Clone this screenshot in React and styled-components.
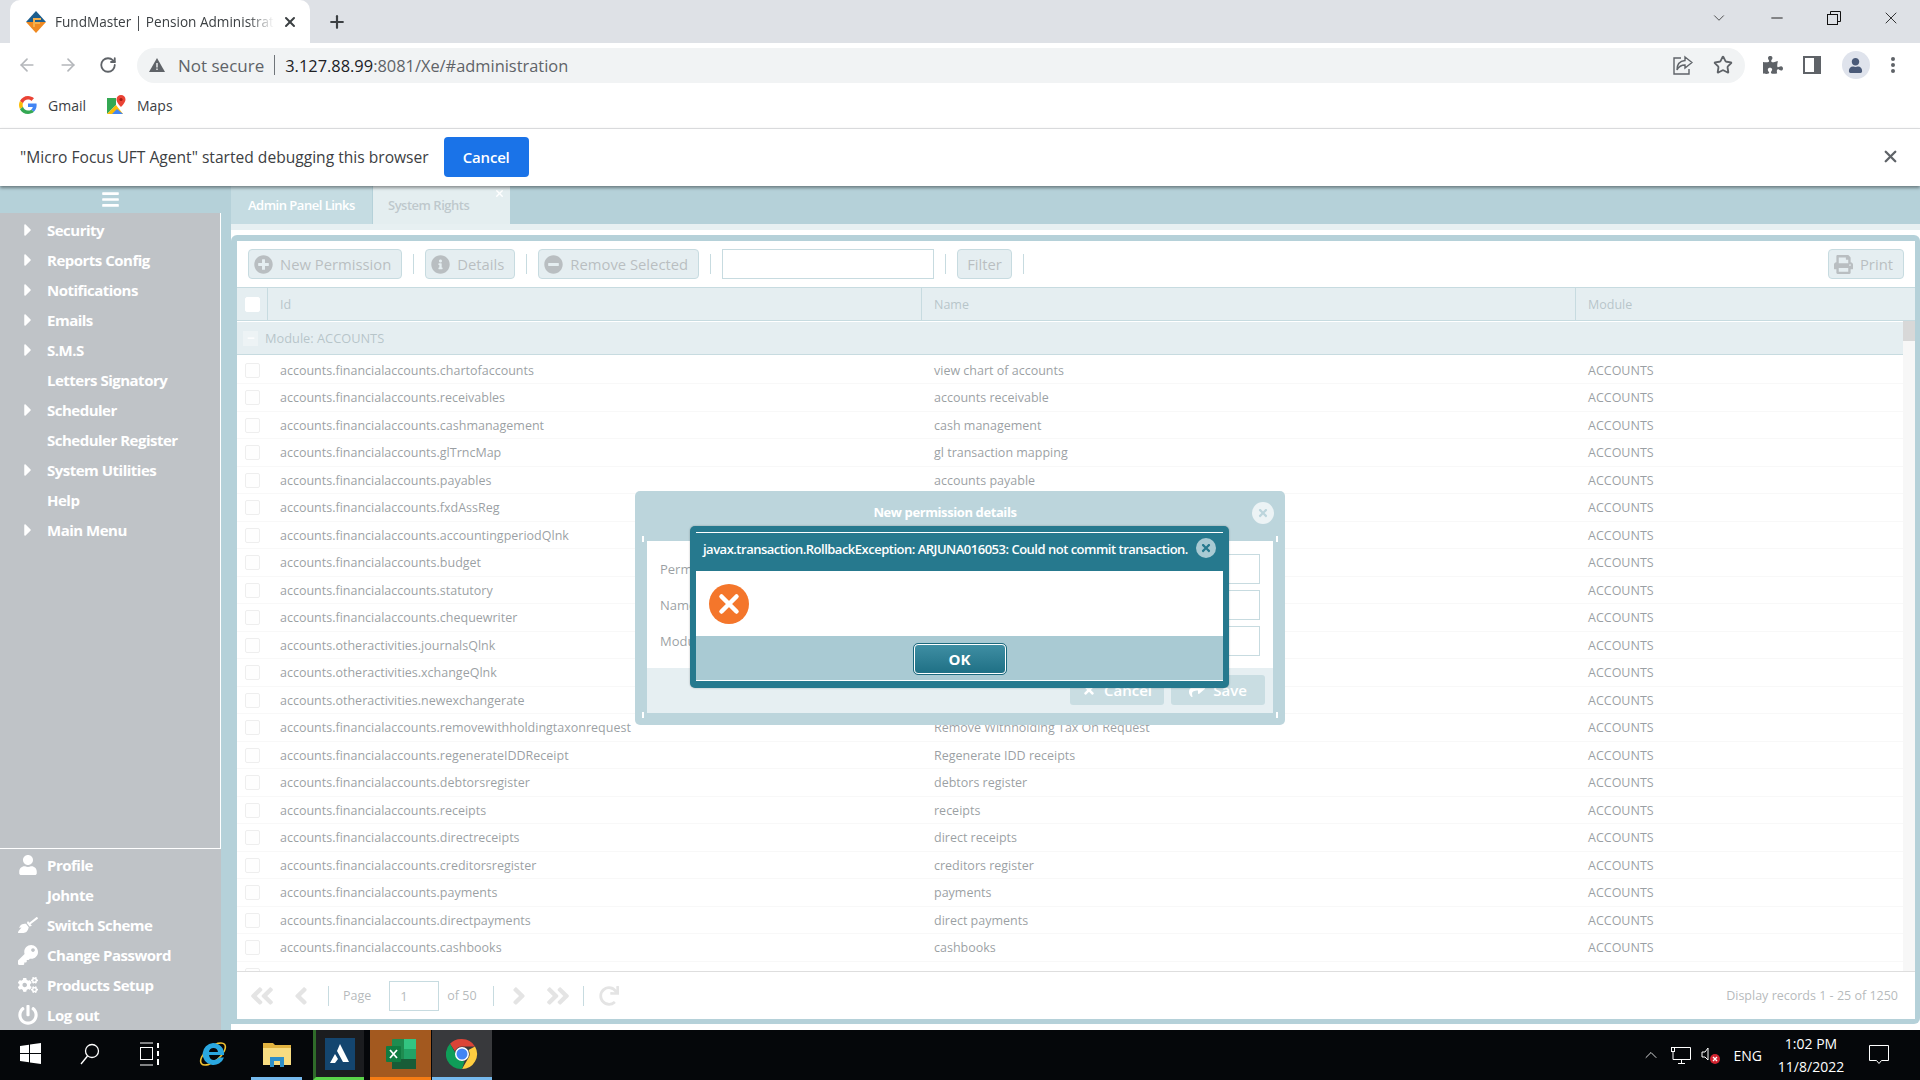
import React from "react";
import styled, { createGlobalStyle } from "styled-components";
import {
  FaCaretRight,
  FaBars,
  FaUser,
  FaBroom,
  FaKey,
  FaCogs,
  FaPowerOff,
  FaPlusCircle,
  FaInfoCircle,
  FaMinusCircle,
  FaPrint,
  FaAngleDoubleLeft,
  FaAngleLeft,
  FaAngleRight,
  FaAngleDoubleRight,
  FaRedo,
  FaTimes,
  FaShare,
  FaPuzzlePiece,
} from "react-icons/fa";
import { ArrowLeft, ArrowRight, RotateCw, Star, Plus, X, ChevronDown, Minus, ChevronUp } from "lucide-react";

const GlobalStyle = createGlobalStyle`
  html, body { margin: 0; padding: 0; height: 100%; overflow: hidden; }
  #root { height: 100%; }
  * { box-sizing: border-box; }
`;

const topMenu = [
  ["Security", true],
  ["Reports Config", true],
  ["Notifications", true],
  ["Emails", true],
  ["S.M.S", true],
  ["Letters Signatory", false],
  ["Scheduler", true],
  ["Scheduler Register", false],
  ["System Utilities", true],
  ["Help", false],
  ["Main Menu", true],
];

const bottomMenu = [
  ["Profile", FaUser],
  ["Johnte", null],
  ["Switch Scheme", FaBroom],
  ["Change Password", FaKey],
  ["Products Setup", FaCogs],
  ["Log out", FaPowerOff],
];

const rows = [
  ["accounts.financialaccounts.chartofaccounts", "view chart of accounts"],
  ["accounts.financialaccounts.receivables", "accounts receivable"],
  ["accounts.financialaccounts.cashmanagement", "cash management"],
  ["accounts.financialaccounts.glTrncMap", "gl transaction mapping"],
  ["accounts.financialaccounts.payables", "accounts payable"],
  ["accounts.financialaccounts.fxdAssReg", ""],
  ["accounts.financialaccounts.accountingperiodQlnk", ""],
  ["accounts.financialaccounts.budget", ""],
  ["accounts.financialaccounts.statutory", ""],
  ["accounts.financialaccounts.chequewriter", ""],
  ["accounts.otheractivities.journalsQlnk", ""],
  ["accounts.otheractivities.xchangeQlnk", ""],
  ["accounts.otheractivities.newexchangerate", ""],
  ["accounts.financialaccounts.removewithholdingtaxonrequest", "Remove Withholding Tax On Request"],
  ["accounts.financialaccounts.regenerateIDDReceipt", "Regenerate IDD receipts"],
  ["accounts.financialaccounts.debtorsregister", "debtors register"],
  ["accounts.financialaccounts.receipts", "receipts"],
  ["accounts.financialaccounts.directreceipts", "direct receipts"],
  ["accounts.financialaccounts.creditorsregister", "creditors register"],
  ["accounts.financialaccounts.payments", "payments"],
  ["accounts.financialaccounts.directpayments", "direct payments"],
  ["accounts.financialaccounts.cashbooks", "cashbooks"],
];

function GoogleG() {
  return (
    <svg width="18" height="18" viewBox="0 0 48 48">
      <path fill="#EA4335" d="M24 9.5c3.5 0 6.700 1.300 9.100 3.500l6.800-6.800C35.900 2.400 30.300 0 24 0 14.600 0 6.500 5.400 2.600 13.200l7.900 6.200C12.400 13.700 17.700 9.500 24 9.500z" />
      <path fill="#4285F4" d="M47 24.500c0-1.600-.1-3.100-.4-4.500H24v9h12.900c-.6 3-2.200 5.500-4.700 7.200l7.300 5.700C43.900 37.800 47 31.700 47 24.500z" />
      <path fill="#FBBC05" d="M10.500 28.600c-.5-1.400-.8-3-.8-4.600s.3-3.200.8-4.600l-7.900-6.200C.9 16.500 0 20.100 0 24s.9 7.500 2.600 10.800l7.900-6.200z" />
      <path fill="#34A853" d="M24 48c6.500 0 11.900-2.100 15.900-5.800l-7.300-5.700c-2.200 1.500-5 2.300-8.600 2.300-6.300 0-11.600-4.200-13.500-9.900l-7.900 6.200C6.500 42.600 14.600 48 24 48z" />
    </svg>
  );
}

function MapsIcon() {
  return (
    <svg width="20" height="20" viewBox="0 0 20 20">
      <path fill="#34a853" d="M1 3l9 0 0 7-9 9z" />
      <path fill="#fbbc04" d="M1 19l9-9 7 9z" />
      <path fill="#4285f4" d="M6 19l5-5 6 5z" />
      <path fill="#ea4335" d="M15 0a4.500 4.500 0 0 0-4.500 4.500c0 3 4.500 7.500 4.500 7.500s4.500-4.500 4.500-7.500A4.500 4.500 0 0 0 15 0z" />
      <circle cx="15" cy="4.500" r="1.600" fill="#a61c12" />
    </svg>
  );
}

function Favicon() {
  return (
    <svg width="22" height="24" viewBox="0 0 22 24">
      <path fill="#1d5e8e" d="M11 1l10 11-10 0L1 12z" />
      <path fill="#ef8a22" d="M11 23L1 12l10 0 10 0z" />
      <path fill="#f5b04c" d="M8 8h8v2h-6v2h5v2h-5v3H8z" />
    </svg>
  );
}

function ChromeLogo() {
  return (
    <svg width="32" height="32" viewBox="0 0 32 32">
      <path fill="#db4437" d="M16 1a15 15 0 0 1 13 7.500H16a7.500 7.500 0 0 0-7 4.800L4 5.700A15 15 0 0 1 16 1z" />
      <path fill="#ffcd40" d="M29 8.500A15 15 0 0 1 16 31l6.500-11.200A7.500 7.500 0 0 0 22.500 12z" />
      <path fill="#0f9d58" d="M4 5.700l6.500 11.200a7.500 7.500 0 0 0 8 6.400L16 31A15 15 0 0 1 4 5.700z" />
      <circle cx="16" cy="16" r="7" fill="#fff" />
      <circle cx="16" cy="16" r="5.500" fill="#4285f4" />
    </svg>
  );
}

function WindowsLogo() {
  return (
    <svg width="21" height="21" viewBox="0 0 21 21">
      <path fill="#fff" d="M0 3l9-1.300V10H0zM10 1.500L21 0v10H10zM0 11h9v8.300L0 18zM10 11h11v10l-11-1.500z" />
    </svg>
  );
}

function TaskViewIcon() {
  return (
    <svg width="22" height="24" viewBox="0 0 22 24" fill="none" stroke="#fff" strokeWidth="1">
      <path d="M1 1h13M1 23h13" />
      <rect x="1.500" y="5.500" width="12" height="12" />
      <path d="M19 1v5M19 9v5M19 17v6" strokeWidth="2" />
    </svg>
  );
}

function IeLogo() {
  return (
    <svg width="30" height="32" viewBox="0 0 30 32">
      <ellipse cx="15" cy="16" rx="15" ry="7" fill="none" stroke="#f1c232" strokeWidth="1.600" transform="rotate(-40 15 16)" />
      <path fill="#2aa7e0" d="M15 5a11 11 0 0 1 11 12H11c.3 3 2 5 5 5 2 0 3.500-1 4.500-2.500H26A11 11 0 1 1 15 5zm-4 9h9c-.3-2.500-2-4-4.500-4S11.300 11.500 11 14z" />
    </svg>
  );
}

function ExplorerLogo() {
  return (
    <svg width="28" height="26" viewBox="0 0 28 26">
      <path fill="#e2b340" d="M0 2h10l2 2h16v20H0z" />
      <path fill="#f8dc81" d="M0 7h28v17H0z" />
      <path fill="#2e8fc9" d="M7 16h14v10h-4v-6h-6v6H7z" />
    </svg>
  );
}

function ArcLogo() {
  return (
    <svg width="30" height="32" viewBox="0 0 30 32">
      <rect width="30" height="32" fill="#14456f" />
      <path fill="#fff" d="M15 6l9 18h-6l-6-11zM10 16l3 5-3 4H5z" />
    </svg>
  );
}

function ExcelLogo() {
  return (
    <svg width="30" height="32" viewBox="0 0 30 32">
      <rect x="6" y="1" width="24" height="30" rx="1" fill="#1f8c50" />
      <rect x="18" y="1" width="12" height="10" fill="#33c481" />
      <rect x="18" y="11" width="12" height="10" fill="#21a366" />
      <rect x="6" y="21" width="24" height="10" fill="#185c37" />
      <rect x="0" y="8" width="15" height="16" rx="1" fill="#107c41" />
      <path d="M4 12l7 8M11 12l-7 8" stroke="#fff" strokeWidth="1.800" />
    </svg>
  );
}

function RestoreGlyph() {
  return (
    <svg width="14" height="14" viewBox="0 0 14 14" fill="none" stroke="#111" strokeWidth="1">
      <rect x="0.500" y="3.500" width="10" height="10" />
      <path d="M3.500 3.500v-3h10v10h-3" />
    </svg>
  );
}

function ShareGlyph() {
  return (
    <svg width="20" height="20" viewBox="0 0 20 20" fill="none" stroke="#5f6368" strokeWidth="1.400">
      <path d="M8 3H1v16h15v-5" />
      <path d="M12 2l7 5.500-7 5.500v-3c-4 0-6 1-8 5 0-6 3-9 8-9.500z" />
    </svg>
  );
}

function PanelGlyph() {
  return (
    <svg width="18" height="18" viewBox="0 0 18 18">
      <path fill="#5f6368" d="M0 0h18v18H0z" />
      <path fill="#fff" d="M2 2h9v14H2z" />
    </svg>
  );
}

function DotsGlyph() {
  return (
    <svg width="6" height="18" viewBox="0 0 6 18" fill="#5f6368">
      <circle cx="3" cy="3" r="2" />
      <circle cx="3" cy="9" r="2" />
      <circle cx="3" cy="15" r="2" />
    </svg>
  );
}

function SearchGlyph() {
  return (
    <svg width="20" height="22" viewBox="0 0 20 22" fill="none" stroke="#fff" strokeWidth="1.300">
      <circle cx="12" cy="8" r="6.500" />
      <path d="M7.500 13L1 21" />
    </svg>
  );
}

function MonitorGlyph() {
  return (
    <svg width="20" height="18" viewBox="0 0 20 18" fill="none" stroke="#fff" strokeWidth="1">
      <path d="M4 1.500h15.500v12H2V6" />
      <path d="M10.500 14v3M7 17.500h7" />
      <rect x="0.500" y="1.500" width="3" height="4" />
    </svg>
  );
}

function SpeakerGlyph() {
  return (
    <svg width="20" height="18" viewBox="0 0 20 18">
      <path d="M1 6h3l3-4v12l-3-3H1z" fill="none" stroke="#fff" />
      <circle cx="14" cy="13" r="5" fill="#d2232f" />
      <path d="M12 11l4 4M16 11l-4 4" stroke="#fff" strokeWidth="1.300" />
    </svg>
  );
}

function NotifyGlyph() {
  return (
    <svg width="20" height="20" viewBox="0 0 20 20" fill="none" stroke="#fff" strokeWidth="1">
      <path d="M.5.500h19v15h-7l-2.500 3-2.500-3h-7z" />
    </svg>
  );
}

function App() {
  return (
    <Page>
      <GlobalStyle />
      <TabStrip>
        <BrowserTab>
          <Favicon />
          <TabTitle>FundMaster | Pension Administration</TabTitle>
          <X size={16} strokeWidth={3} color="#3c4043" />
        </BrowserTab>
        <NewTab>
          <Plus size={20} strokeWidth={2.6} color="#3c4043" />
        </NewTab>
        <WindowButtons>
          <ChevronDown size={18} strokeWidth={1} color="#222" />
          <Minus size={18} strokeWidth={1.2} color="#111" />
          <RestoreGlyph />
          <X size={20} strokeWidth={1} color="#111" />
        </WindowButtons>
      </TabStrip>

      <Toolbar>
        <NavIcons>
          <ArrowLeft size={20} color="#b4b7bb" />
          <ArrowRight size={20} color="#b4b7bb" />
          <RotateCw size={18} strokeWidth={2.4} color="#5f6368" />
        </NavIcons>
        <Omnibox>
          <WarnIcon viewBox="0 0 16 16">
            <path fill="#5f6368" d="M8 1l8 14H0z" />
            <path fill="#f1f3f4" d="M7.300 6h1.400v4.500H7.300zM7.300 11.500h1.400V13H7.300z" />
          </WarnIcon>
          <Insecure>Not secure</Insecure>
          <UrlBar />
          <Url>
            3.127.88.99<UrlMuted>:8081/Xe/#administration</UrlMuted>
          </Url>
          <OmniRight>
            <ShareGlyph />
            <Star size={20} strokeWidth={2.2} color="#5f6368" />
          </OmniRight>
        </Omnibox>
        <ToolbarRight>
          <FaPuzzlePiece size={20} color="#5f6368" />
          <PanelGlyph />
          <Avatar>
            <FaUser size={15} color="#4a5a78" />
          </Avatar>
          <DotsGlyph />
        </ToolbarRight>
      </Toolbar>

      <Bookmarks>
        <Bookmark>
          <GoogleG />
          Gmail
        </Bookmark>
        <Bookmark>
          <MapsIcon />
          Maps
        </Bookmark>
      </Bookmarks>

      <InfoBar>
        <InfoText>"Micro Focus UFT Agent" started debugging this browser</InfoText>
        <BlueButton>Cancel</BlueButton>
        <InfoClose>
          <X size={19} strokeWidth={3} color="#5f6368" />
        </InfoClose>
      </InfoBar>

      <AppBody>
        <Sidebar>
          <SideHead>
            <FaBars size={19} color="#fff" />
          </SideHead>
          <SideTop>
            {topMenu.map(([label, hasArrow]) => (
              <SideItem key={label}>
                <SideIcon>{hasArrow && <FaCaretRight size={20} />}</SideIcon>
                {label}
              </SideItem>
            ))}
          </SideTop>
          <SideBottom>
            {bottomMenu.map(([label, Icon]) => (
              <SideItem key={label}>
                <SideIcon>{Icon && <Icon size={20} />}</SideIcon>
                {label}
              </SideItem>
            ))}
          </SideBottom>
        </Sidebar>

        <Main>
          <TabBar>
            <AppTab>Admin Panel Links</AppTab>
            <AppTab $active>
              System Rights
              <TabClose>
                <X size={11} strokeWidth={3} />
              </TabClose>
            </AppTab>
          </TabBar>
          <Sheet>
            <Strip />
            <Panel>
              <PanelInner>
                <GridTools>
                  <ToolButton>
                    <FaPlusCircle size={19} /> New Permission
                  </ToolButton>
                  <Sep />
                  <ToolButton>
                    <FaInfoCircle size={19} /> Details
                  </ToolButton>
                  <Sep />
                  <ToolButton>
                    <FaMinusCircle size={19} /> Remove Selected
                  </ToolButton>
                  <Sep />
                  <FilterInput />
                  <Sep />
                  <ToolButton $plain>Filter</ToolButton>
                  <Sep />
                  <Grow />
                  <ToolButton>
                    <FaPrint size={19} /> Print
                  </ToolButton>
                </GridTools>
                <GridHeader>
                  <CheckCol>
                    <Check $head />
                  </CheckCol>
                  <HeadCell $w={654}>Id</HeadCell>
                  <HeadCell $w={654}>Name</HeadCell>
                  <HeadCell $w={300}>Module</HeadCell>
                </GridHeader>
                <GridBody>
                  <GroupRow>
                    <GroupToggle>
                      <Minus size={10} strokeWidth={3} />
                    </GroupToggle>
                    Module: ACCOUNTS
                  </GroupRow>
                  {rows.map(([id, name]) => (
                    <Row key={id}>
                      <CheckCol>
                        <Check />
                      </CheckCol>
                      <Cell $w={654}>{id}</Cell>
                      <Cell $w={654}>{name}</Cell>
                      <Cell $w={300}>ACCOUNTS</Cell>
                    </Row>
                  ))}
                  <Row>
                    <CheckCol>
                      <Check />
                    </CheckCol>
                  </Row>
                  <ScrollTrack>
                    <ScrollThumb />
                  </ScrollTrack>
                </GridBody>
                <Pager>
                  <PagerIcon><FaAngleDoubleLeft size={28} /></PagerIcon>
                  <PagerIcon><FaAngleLeft size={28} /></PagerIcon>
                  <PagerSep $before={2} $after={3} />
                  <PagerText>Page</PagerText>
                  <PageInput>1</PageInput>
                  <PagerText>of 50</PagerText>
                  <PagerSep $before={5} />
                  <PagerIcon><FaAngleRight size={28} /></PagerIcon>
                  <PagerIcon><FaAngleDoubleRight size={28} /></PagerIcon>
                  <PagerSep />
                  <PagerIcon><FaRedo size={20} /></PagerIcon>
                  <Grow />
                  <PagerText>Display records 1 - 25 of 1250</PagerText>
                </Pager>
              </PanelInner>
            </Panel>
          </Sheet>
        </Main>

        <PermissionWindow>
          <WinTitle>
            New permission details
            <WinClose>
              <FaTimes size={12} />
            </WinClose>
          </WinTitle>
          <WinFrame>
            <WinBody>
              <WinForm>
                {["Permission", "Name", "Module"].map((label) => (
                  <FormRow key={label}>
                    <FormLabel>{label}</FormLabel>
                    <FormInput />
                  </FormRow>
                ))}
              </WinForm>
              <WinFooter>
                <WinButton>
                  <FaTimes size={14} /> Cancel
                </WinButton>
                <WinButton>
                  <FaShare size={16} /> Save
                </WinButton>
              </WinFooter>
            </WinBody>
          </WinFrame>
        </PermissionWindow>

        <Mask />

        <AlertBox>
          <AlertFrame>
            <AlertTitle>
              javax.transaction.RollbackException: ARJUNA016053: Could not commit transaction.
              <AlertClose>
                <FaTimes size={12} />
              </AlertClose>
            </AlertTitle>
            <AlertBody>
              <ErrorBadge>
                <X size={30} strokeWidth={3.6} color="#fff" />
              </ErrorBadge>
            </AlertBody>
            <AlertFooter>
              <OkButton>OK</OkButton>
            </AlertFooter>
          </AlertFrame>
        </AlertBox>
      </AppBody>

      <Taskbar>
        <TaskSlot><WindowsLogo /></TaskSlot>
        <TaskSlot><SearchGlyph /></TaskSlot>
        <TaskSlot><TaskViewIcon /></TaskSlot>
        <TaskSlot $w={66}><IeLogo /></TaskSlot>
        <TaskSlot $w={51} $ml={5} $line="#76b9ed"><ExplorerLogo /></TaskSlot>
        <TaskSlot $w={51} $ml={11} $bg="#1b1c1f" $line="#5ad34a" $edge="#2f6b2a"><ArcLogo /></TaskSlot>
        <TaskSlot $w={61} $ml={6} $bg="#a3591f" $line="#f57c14"><ExcelLogo /></TaskSlot>
        <TaskSlot $w={60} $ml={1} $bg="#38393c" $line="#76b9ed"><ChromeLogo /></TaskSlot>
        <Grow />
        <Tray>
          <ChevronUp size={20} strokeWidth={1} color="#fff" />
          <MonitorGlyph />
          <SpeakerGlyph />
          <TrayLang>ENG</TrayLang>
          <Clock>
            <span>1:02 PM</span>
            <span>11/8/2022</span>
          </Clock>
          <NotifyGlyph />
        </Tray>
      </Taskbar>
    </Page>
  );
}

export default App;

const Page = styled.div`
  width: 1920px;
  height: 1080px;
  display: flex;
  flex-direction: column;
  overflow: hidden;
  background: #fff;
  font-family: "Open Sans", "Liberation Sans", sans-serif;
`;

const TabStrip = styled.div`
  height: 43px;
  flex: none;
  display: flex;
  padding-left: 10px;
  background: #dee1e6;
`;

const BrowserTab = styled.div`
  width: 300px;
  padding: 0 12px 0 15px;
  display: flex;
  align-items: center;
  gap: 8px;
  background: #fff;
  border-radius: 10px 10px 0 0;
`;

const TabTitle = styled.span`
  flex: 1;
  overflow: hidden;
  white-space: nowrap;
  font-size: 13.600px;
  color: #3c4043;
  -webkit-mask-image: linear-gradient(90deg, #000 88%, transparent);
  mask-image: linear-gradient(90deg, #000 88%, transparent);
`;

const NewTab = styled.div`
  padding-left: 17px;
  display: flex;
  align-items: center;
`;

const WindowButtons = styled.div`
  margin-left: auto;
  height: 36px;
  width: 210px;
  padding-right: 19px;
  display: flex;
  align-items: center;
  justify-content: space-between;
`;

const Toolbar = styled.div`
  height: 43px;
  flex: none;
  padding-top: 1px;
  display: flex;
  align-items: center;
  background: #fff;
`;

const NavIcons = styled.div`
  width: 137px;
  padding: 0 20px 0 17px;
  display: flex;
  align-items: center;
  justify-content: space-between;
`;

const Omnibox = styled.div`
  width: 1608px;
  height: 35px;
  display: flex;
  align-items: center;
  padding: 0 12px 0 12px;
  border-radius: 18px;
  background: #f1f3f4;
  font-size: 17px;
`;

const WarnIcon = styled.svg`
  width: 16px;
  height: 16px;
  margin-right: 13px;
`;

const Insecure = styled.span`
  color: #5f6368;
`;

const UrlBar = styled.span`
  width: 1px;
  height: 20px;
  margin: 0 10px;
  background: #70757a;
`;

const Url = styled.span`
  color: #202124;
  font-size: 16.400px;
`;

const UrlMuted = styled.span`
  color: #5f6368;
`;

const OmniRight = styled.div`
  margin-left: auto;
  display: flex;
  align-items: center;
  gap: 20px;
`;

const ToolbarRight = styled.div`
  flex: 1;
  padding: 0 24px 0 18px;
  display: flex;
  align-items: center;
  justify-content: space-between;
`;

const Avatar = styled.div`
  width: 28px;
  height: 28px;
  display: flex;
  align-items: center;
  justify-content: center;
  border-radius: 50%;
  background: #dfe3ec;
`;

const Bookmarks = styled.div`
  height: 42px;
  flex: none;
  display: flex;
  align-items: center;
  padding: 0 0 4px 19px;
  gap: 20px;
  background: #fff;
`;

const Bookmark = styled.div`
  display: flex;
  align-items: center;
  gap: 11px;
  font-size: 14px;
  color: #3c4043;
`;

const InfoBar = styled.div`
  height: 58px;
  flex: none;
  display: flex;
  align-items: center;
  padding: 0 20px 2px;
  border-top: 1px solid #d9dadc;
  background: #fff;
  box-shadow: 0 2px 3px rgba(0, 0, 0, 0.4);
  position: relative;
  z-index: 3;
`;

const InfoText = styled.span`
  font-size: 15.600px;
  color: #3c4043;
`;

const BlueButton = styled.div`
  width: 85px;
  height: 40px;
  margin-left: 15px;
  display: flex;
  align-items: center;
  justify-content: center;
  border-radius: 4px;
  background: #1a73e8;
  color: #fff;
  font-size: 15px;
  font-weight: 600;
  letter-spacing: -0.200px;
`;

const InfoClose = styled.div`
  margin-left: auto;
  display: flex;
`;

const AppBody = styled.div`
  flex: 1;
  min-height: 0;
  display: flex;
  position: relative;
  background: #6ba3b3;
`;

const Sidebar = styled.div`
  width: 221px;
  flex: none;
  display: flex;
  flex-direction: column;
  background: #7f878f;
  color: #fff;
  font-size: 15px;
  font-weight: 700;
  letter-spacing: -0.500px;
`;

const SideHead = styled.div`
  height: 27px;
  display: flex;
  align-items: center;
  justify-content: center;
  background: #6ba3b3;
`;

const SideTop = styled.div`
  flex: 1;
  padding-top: 2px;
  border-right: 1px solid #fff;
  border-bottom: 1px solid #fff;
`;

const SideBottom = styled.div`
  padding: 1px 0 0;
`;

const SideItem = styled.div`
  height: 30px;
  display: flex;
  align-items: center;
`;

const SideIcon = styled.span`
  width: 47px;
  padding-left: 18px;
  flex: none;
  display: flex;
  align-items: center;
`;

const Main = styled.div`
  flex: 1;
  min-width: 0;
  display: flex;
  flex-direction: column;
`;

const TabBar = styled.div`
  height: 38px;
  flex: none;
  display: flex;
  gap: 1px;
  padding-left: 10px;
`;

const AppTab = styled.div`
  width: ${(p) => (p.$active ? "137px" : "141px")};
  display: flex;
  align-items: center;
  padding-left: ${(p) => (p.$active ? "15px" : "17px")};
  position: relative;
  background: ${(p) => (p.$active ? "#c9dde1" : "#8bb9c5")};
  color: ${(p) => (p.$active ? "#7d9199" : "#fff")};
  font-size: 13px;
  font-weight: 600;
  letter-spacing: -0.500px;
`;

const TabClose = styled.span`
  position: absolute;
  top: 2px;
  right: 5px;
  display: flex;
  color: #fff;
`;

const Sheet = styled.div`
  flex: 1;
  min-height: 0;
  margin-left: 10px;
  display: flex;
  flex-direction: column;
  background: #fff;
  padding-bottom: 6px;
`;

const Strip = styled.div`
  height: 6px;
  flex: none;
  margin-bottom: 5px;
  background: #cfe1e5;
`;

const Panel = styled.div`
  flex: 1;
  min-height: 0;
  display: flex;
  padding: 6px 5px 5px 6px;
  background: #6ba3b3;
  border-radius: 6px 6px 6px 0;
`;

const PanelInner = styled.div`
  flex: 1;
  min-width: 0;
  display: flex;
  flex-direction: column;
  background: #fff;
`;

const GridTools = styled.div`
  height: 46px;
  flex: none;
  display: flex;
  align-items: center;
  gap: 11px;
  padding: 0 11px;
`;

const ToolButton = styled.div`
  height: 30px;
  display: flex;
  align-items: center;
  gap: 7px;
  padding: ${(p) => (p.$plain ? "0 9px" : "0 10px 0 5px")};
  border: 1px solid #8fb7c1;
  border-radius: 4px;
  background: #cbdde3;
  color: #737d82;
  font-size: 14.800px;
`;

const Sep = styled.span`
  width: 1px;
  height: 20px;
  flex: none;
  background: #8fb7c1;
`;

const FilterInput = styled.div`
  width: 212px;
  height: 30px;
  border: 1px solid #8fb7c1;
  background: #fff;
`;

const Grow = styled.div`
  flex: 1;
`;

const GridHeader = styled.div`
  height: 34px;
  flex: none;
  display: flex;
  align-items: center;
  border-top: 1px solid #8fb7c1;
  border-bottom: 1px solid #8fb7c1;
  background: #cbdde3;
`;

const CheckCol = styled.div`
  width: 30px;
  flex: none;
  display: flex;
  align-items: center;
  justify-content: center;
`;

const Check = styled.span`
  width: 15px;
  height: 15px;
  display: block;
  border: 1px solid ${(p) => (p.$head ? "#fff" : "#dcdcdc")};
  border-radius: 2px;
  background: ${(p) => (p.$head ? "#fff" : "#fdfdfd")};
`;

const HeadCell = styled.div`
  width: ${(p) => p.$w}px;
  height: 100%;
  display: flex;
  align-items: center;
  padding-left: 12px;
  border-left: 1px solid #8fb7c1;
  font-size: 12.500px;
  color: #6f8a93;
`;

const GridBody = styled.div`
  flex: 1;
  min-height: 0;
  position: relative;
  overflow: hidden;
  padding-right: 12px;
`;

const GroupRow = styled.div`
  height: 33px;
  margin: 1px 0 1.500px;
  display: flex;
  align-items: center;
  gap: 7px;
  padding-left: 6px;
  border-bottom: 1px solid #8fb7c1;
  background: #cbdde3;
  color: #6f8a93;
  font-size: 12.800px;
`;

const GroupToggle = styled.span`
  width: 15px;
  height: 15px;
  display: flex;
  align-items: center;
  justify-content: center;
  background: #dbe7ea;
  color: #fff;
`;

const Row = styled.div`
  height: 27.500px;
  padding-top: 1px;
  display: flex;
  align-items: center;
  border-bottom: 1px solid #f0f0f0;
`;

const Cell = styled.div`
  width: ${(p) => p.$w}px;
  padding-left: 13px;
  white-space: nowrap;
  font-size: 12.500px;
  color: #353f47;
`;

const ScrollTrack = styled.div`
  position: absolute;
  top: 0;
  right: 0;
  bottom: 0;
  width: 12px;
  background: #eeeeee;
`;

const ScrollThumb = styled.div`
  height: 20px;
  background: #b1b1b1;
`;

const Pager = styled.div`
  height: 48px;
  flex: none;
  display: flex;
  align-items: center;
  gap: 11px;
  padding: 0 17px 0 11px;
  border-top: 1px solid #bdbdbd;
`;

const PagerIcon = styled.span`
  width: 28px;
  display: flex;
  justify-content: center;
  color: #c9c9c9;
`;

const PagerSep = styled(Sep)`
  margin: 0 ${(p) => p.$after || 0}px 0 ${(p) => p.$before || 0}px;
`;

const PagerText = styled.span`
  font-size: 12.500px;
  color: #6c7478;
`;

const PageInput = styled.div`
  width: 50px;
  height: 30px;
  margin: 0 -3px 0 7px;
  padding-left: 10px;
  display: flex;
  align-items: center;
  border: 1px solid #8fb7c1;
  font-size: 13px;
  color: #6c7478;
`;

const Mask = styled.div`
  position: absolute;
  inset: 0;
  background: rgba(255, 255, 255, 0.5);
`;

const PermissionWindow = styled.div`
  position: absolute;
  left: 635px;
  top: 305px;
  width: 650px;
  height: 234px;
  display: flex;
  flex-direction: column;
  padding: 0 7px 7px;
  border-radius: 5px;
  background: #79abb9;
`;

const WinTitle = styled.div`
  height: 45px;
  flex: none;
  padding: 0 30px 4px 0;
  display: flex;
  align-items: center;
  justify-content: center;
  position: relative;
  color: #fff;
  font-size: 13px;
  font-weight: 700;
  letter-spacing: -0.400px;
`;

const WinClose = styled.span`
  position: absolute;
  right: 4px;
  top: 11px;
  width: 22px;
  height: 22px;
  display: flex;
  align-items: center;
  justify-content: center;
  border-radius: 50%;
  background: #d8e6ea;
  color: #79abb9;
`;

const WinFrame = styled.div`
  flex: 1;
  display: flex;
  padding: 5px;
  background:
    linear-gradient(#fff, #fff) left top / 2px 6px no-repeat,
    linear-gradient(#fff, #fff) right top / 2px 6px no-repeat,
    linear-gradient(#fff, #fff) left bottom / 2px 6px no-repeat,
    linear-gradient(#fff, #fff) right bottom / 2px 6px no-repeat;
`;

const WinBody = styled.div`
  flex: 1;
  display: flex;
  flex-direction: column;
  background: #fff;
`;

const WinForm = styled.div`
  flex: 1;
  padding: 13px 13px 0;
  display: flex;
  flex-direction: column;
  gap: 6px;
`;

const FormRow = styled.div`
  height: 30px;
  display: flex;
  align-items: center;
  justify-content: space-between;
`;

const FormLabel = styled.span`
  font-size: 13px;
  color: #353f47;
`;

const FormInput = styled.div`
  width: 400px;
  height: 30px;
  border: 1px solid #8fb7c1;
`;

const WinFooter = styled.div`
  height: 45px;
  flex: none;
  padding: 0 8px 2px 0;
  display: flex;
  align-items: center;
  justify-content: flex-end;
  gap: 7px;
  background: #cddfe5;
`;

const WinButton = styled.div`
  width: 94px;
  height: 30px;
  display: flex;
  align-items: center;
  justify-content: center;
  gap: 8px;
  border-radius: 3px;
  background: #93bbc5;
  color: #fff;
  font-size: 15px;
  font-weight: 600;
`;

const AlertBox = styled.div`
  position: absolute;
  left: 690px;
  top: 340px;
  width: 539px;
  height: 162px;
  padding: 6px 6px 7px;
  border-radius: 5px;
  background: #26798e;
  box-shadow: 0 0 2px rgba(0, 0, 0, 0.3);
`;

const AlertFrame = styled.div`
  height: 100%;
  display: flex;
  flex-direction: column;
  border-top: 1px solid #fff;
  border-bottom: 1px solid #fff;
`;

const AlertTitle = styled.div`
  height: 38px;
  flex: none;
  display: flex;
  align-items: center;
  padding: 0 0 6px 7px;
  position: relative;
  color: #fff;
  font-size: 13px;
  font-weight: 600;
  letter-spacing: -0.500px;
  white-space: nowrap;
`;

const AlertClose = styled.span`
  position: absolute;
  right: 7px;
  top: 5px;
  width: 20px;
  height: 20px;
  display: flex;
  align-items: center;
  justify-content: center;
  border-radius: 50%;
  background: #a9cad3;
  color: #26798e;
`;

const AlertBody = styled.div`
  height: 65px;
  flex: none;
  display: flex;
  align-items: center;
  padding-left: 13px;
  background: #fff;
`;

const ErrorBadge = styled.span`
  width: 40px;
  height: 40px;
  display: flex;
  align-items: center;
  justify-content: center;
  border-radius: 50%;
  background: #f4762b;
`;

const AlertFooter = styled.div`
  flex: 1;
  padding-top: 2px;
  display: flex;
  align-items: center;
  justify-content: center;
  background: #a9cad3;
`;

const OkButton = styled.div`
  width: 92px;
  height: 30px;
  display: flex;
  align-items: center;
  justify-content: center;
  border: 1px solid #fff;
  outline: 1px solid #1d6a7e;
  outline-offset: 0;
  border-radius: 4px;
  background: linear-gradient(#3f8ea3, #1f7085);
  color: #fff;
  font-size: 15px;
  font-weight: 700;
`;

const Taskbar = styled.div`
  height: 50px;
  flex: none;
  display: flex;
  background: #05070a;
`;

const TaskSlot = styled.div`
  width: ${(p) => p.$w || 60}px;
  margin-left: ${(p) => p.$ml || 0}px;
  display: flex;
  align-items: center;
  justify-content: center;
  background: ${(p) => p.$bg || "transparent"};
  border-bottom: 3px solid ${(p) => p.$line || "transparent"};
  border-left: ${(p) => (p.$edge ? `3px solid ${p.$edge}` : "none")};
`;

const Tray = styled.div`
  display: flex;
  align-items: center;
  gap: 10px;
  padding-right: 31px;
  color: #fff;
`;

const TrayLang = styled.span`
  font-size: 14px;
  margin: 0 -3px 0 3px;
`;

const Clock = styled.div`
  width: 84px;
  margin-right: 6px;
  display: flex;
  flex-direction: column;
  align-items: center;
  gap: 3px;
  font-size: 14px;
  line-height: 20px;
`;
